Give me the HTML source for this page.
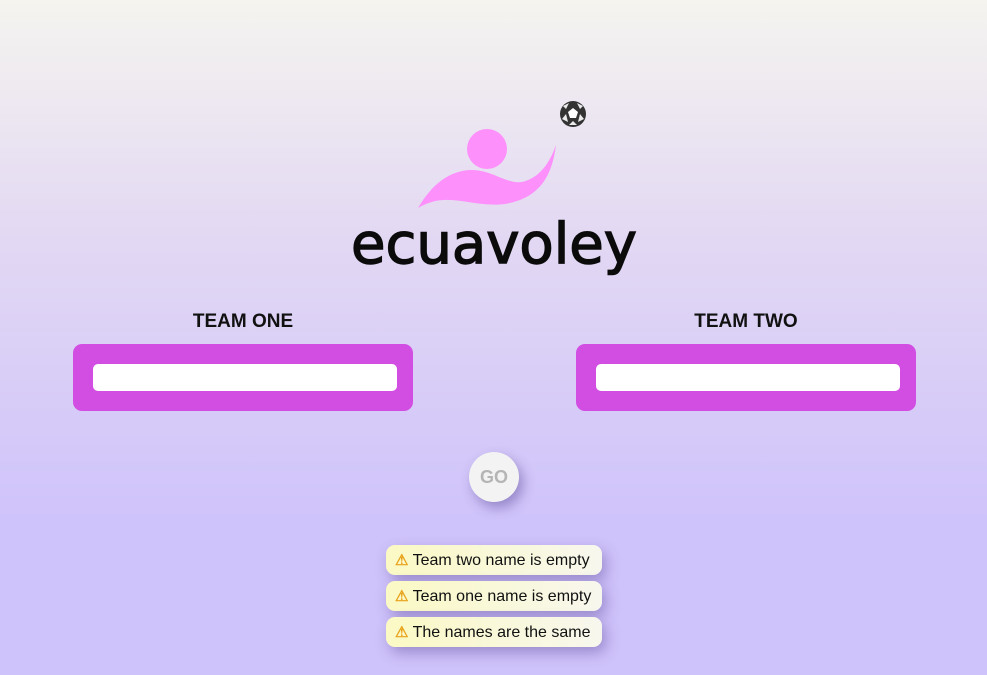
<!DOCTYPE html>
<html><head><style>
html,body{margin:0;width:987px;height:675px;overflow:hidden}
body{background:linear-gradient(180deg,#f5f4ef 0px,#e3d9f3 230px,#d7ccf7 400px,#cfc3fb 520px,#cfc3fb 675px);font-family:"Liberation Sans",sans-serif;position:relative}
.t{position:absolute;font-weight:bold;font-size:19px;width:340px;text-align:center;top:311px;color:#111}
.box{position:absolute;top:344px;width:340px;height:67px;background:#d24ee3;border-radius:9px}
.box div{position:absolute;left:20px;top:20px;width:304px;height:27px;background:#fff;border-radius:5px}
.go{position:absolute;left:469px;top:452px;width:50px;height:50px;border-radius:50%;background:#f3f3f3;box-shadow:4px 6px 12px rgba(80,60,140,.45);color:#b5b5b5;font-weight:bold;font-size:18px;text-align:center;line-height:50px}
.toast{position:absolute;left:386px;width:216px;height:30px;border-radius:9px;background:linear-gradient(90deg,#fbf9c4,#f7f7ee);box-shadow:4px 6px 14px rgba(90,70,150,.45);font-size:16px;line-height:31px;color:#111;padding-left:9px;box-sizing:border-box;white-space:nowrap}
.toast b{color:#e8a21a;font-size:15px}
</style></head><body>
<svg style="position:absolute;left:0;top:0" width="987" height="300">
<circle cx="487" cy="149" r="20" fill="#fd90fb"/>
<path d="M418 208 C432 184 450 170 472 170 C492 170 506 184 522 182 C540 178 550 162 556 145 C552 176 540 198 505 204 C470 208 448 190 418 208 Z" fill="#fd90fb"/>
<circle cx="573" cy="114" r="13" fill="#333"/>
<polygon points="573,108 578,112 576,118 570,118 568,112" fill="#fff"/>
<path d="M563 106 L569 103 L566 109 Z M583 106 L577 103 L580 109 Z M562 119 L566 114 L568 122 Z M584 119 L580 114 L578 122 Z M569 125 L577 125 L573 121 Z" fill="#fff" opacity="0.9"/>
<text x="351" y="263" font-family="DejaVu Sans, Liberation Sans, sans-serif" font-size="56" textLength="286" lengthAdjust="spacingAndGlyphs" fill="#0b0b0b" stroke="#0b0b0b" stroke-width="1.4">ecuavoley</text>
</svg>
<div class="t" style="left:73px">TEAM ONE</div>
<div class="t" style="left:576px">TEAM TWO</div>
<div class="box" style="left:73px"><div></div></div>
<div class="box" style="left:576px"><div></div></div>
<div class="go">GO</div>
<div class="toast" style="top:545px"><b>⚠</b> Team two name is empty</div>
<div class="toast" style="top:581px"><b>⚠</b> Team one name is empty</div>
<div class="toast" style="top:617px"><b>⚠</b> The names are the same</div>
</body></html>
